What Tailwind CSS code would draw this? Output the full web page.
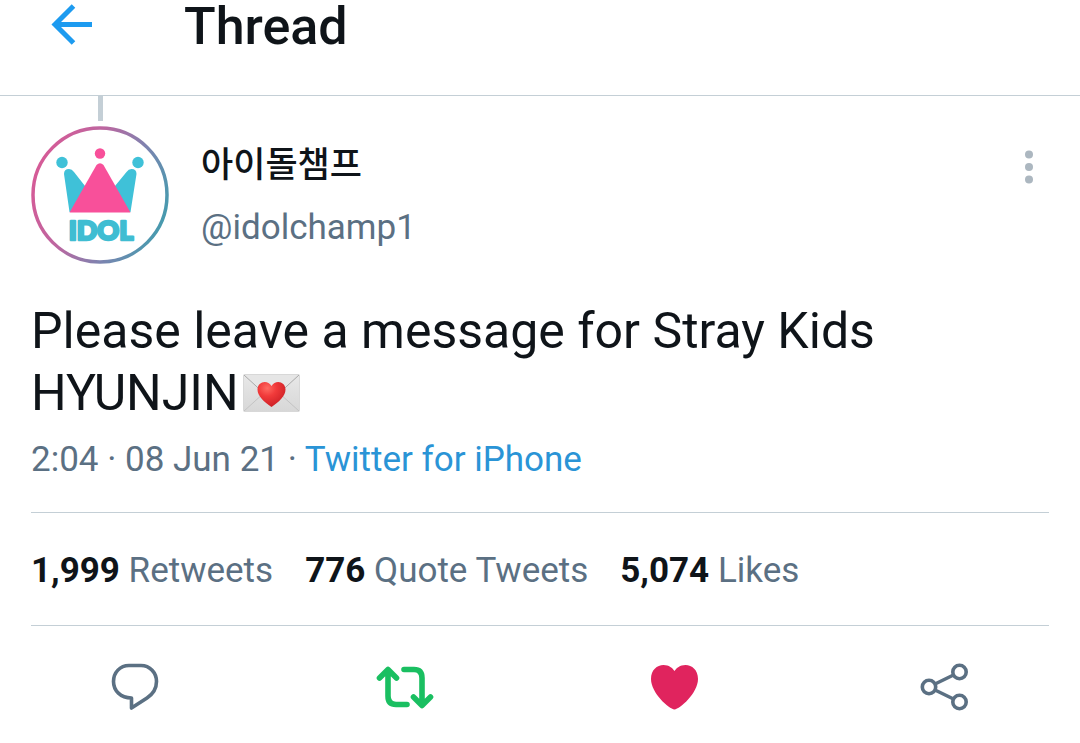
<!DOCTYPE html>
<html lang="en">
<head>
<meta charset="utf-8">
<meta name="viewport" content="width=device-width, initial-scale=1">
<title>Thread</title>
<script src="https://cdn.jsdelivr.net/npm/@tailwindcss/browser@4"></script>
</head>
<body class="bg-white font-[Roboto,'Noto_Sans_CJK_KR',sans-serif] text-[#0f1419]">
<header class="flex h-24 items-start border-b border-[#c4cfd6]">
  <button type="button" aria-label="Back" class="ml-12 h-12 w-12">
    <svg class="h-12 w-12" viewBox="0 0 48 48" fill="none" stroke="#1d9bf0" stroke-width="5"><path d="M44 24.500H6M25.500 6 7 24.500l18.500 18.500"/></svg>
  </button>
  <h1 class="ml-[88px] text-[52px] leading-[54px] font-medium">Thread</h1>
</header>
<main>
  <article>
    <div class="flex px-[31px]">
      <div class="flex w-[138px] shrink-0 flex-col items-center">
        <div class="mb-[5px] h-[25px] w-[5px] bg-[#c4cfd6]"></div>
        <svg class="h-[138px] w-[138px]" viewBox="0 0 138 138" role="img" aria-label="IDOL">
          <defs>
            <linearGradient id="ring" x1="0" y1="0.300" x2="1" y2="0.700">
              <stop offset="0" stop-color="#d75a96"/><stop offset="0.350" stop-color="#bd66a0"/><stop offset="0.680" stop-color="#7c84b0"/><stop offset="1" stop-color="#439cae"/>
            </linearGradient>
          </defs>
          <circle cx="69" cy="69" r="67" fill="none" stroke="url(#ring)" stroke-width="3.500"/>
          <g fill="#3fc1d8">
            <circle cx="31" cy="36.500" r="5.700"/><circle cx="107" cy="36.500" r="5.700"/>
            <path d="M38.500 86 33 48q0-5 5-5 3 0 5 3l11 14 5 26ZM99.500 86l6-38q0-5-5-5-3 0-5 3L84 60l-5 26Z"/>
          </g>
          <g fill="#f8509a"><circle cx="69" cy="27.500" r="5.200"/><path d="M38.500 86.500 65.500 39q3.500-3.500 7 0l27 47.500Z"/></g>
          <text x="70" y="114" text-anchor="middle" font-family="Lato, sans-serif" font-weight="900" font-size="27" fill="#3fbdd2" stroke="#3fbdd2" stroke-width="2.500" stroke-linejoin="round">IDOL</text>
        </svg>
      </div>
      <div class="ml-8 flex-1 pt-[42px]">
        <h2 class="text-[35px] leading-[56px] font-medium">아이돌챔프</h2>
        <p class="pt-1.5 text-[35px] leading-[56px] text-[#5b7083]">@idolchamp1</p>
      </div>
      <button type="button" aria-label="More" class="mt-[51px] h-10 w-10 self-start">
        <svg class="h-10 w-10" viewBox="0 0 40 40" fill="#acb7c0"><circle cx="20" cy="7.500" r="4"/><circle cx="20" cy="20" r="4"/><circle cx="20" cy="32.500" r="4"/></svg>
      </button>
    </div>
    <div class="px-[31px]">
      <p class="mt-9 text-[50px] leading-[62px]">Please leave a message for Stray Kids<br>HYUNJIN<svg class="ml-1 inline-block h-[38px] w-[57px] align-[-2px]" viewBox="0 0 57 38" role="img" aria-label="Love letter">
          <defs>
            <linearGradient id="paper" x1="0" y1="0" x2="0" y2="1"><stop offset="0" stop-color="#e8e8e8"/><stop offset="1" stop-color="#d7d7d7"/></linearGradient>
            <radialGradient id="love" cx="0.350" cy="0.250" r="0.800"><stop offset="0" stop-color="#ff6b62"/><stop offset="0.400" stop-color="#f13a3a"/><stop offset="1" stop-color="#c91d24"/></radialGradient>
          </defs>
          <rect x="0.500" y="0.500" width="56" height="37" rx="1" fill="url(#paper)" stroke="#d8d8d8"/>
          <path d="m1 37 20-18M56 37 36 19" stroke="#c3c3c3" fill="none"/>
          <path d="M1 1l24 22q3.500 3 7 0L56 1" fill="#e6e6e6" stroke="#a9a9a9"/>
          <path d="M28.500 33C21 28 14.500 22 14.500 15.500c0-8 10-10.500 14-3.500 4-7 14-4.500 14 3.500 0 6.500-6.500 12.500-14 17.500Z" fill="url(#love)"/>
        </svg></p>
      <p class="mt-2 text-[35px] leading-[56px] text-[#5b7083]">2:04 · 08 Jun 21 · <a href="#" class="text-[#2a94d6]">Twitter for iPhone</a></p>
      <div class="mt-6 flex gap-8 border-y border-[#c4cfd6] pt-[30px] pb-[26px] text-[35px] leading-[56px] whitespace-nowrap text-[#5b7083]">
        <a href="#"><b class="font-bold text-[#0f1419]">1,999</b> Retweets</a>
        <a href="#"><b class="font-bold text-[#0f1419]">776</b> Quote Tweets</a>
        <a href="#"><b class="font-bold text-[#0f1419]">5,074</b> Likes</a>
      </div>
    </div>
    <div class="grid grid-cols-4 justify-items-center pt-6">
      <button type="button" aria-label="Reply" class="h-[70px] w-20">
        <svg class="h-[70px] w-20" viewBox="0 0 80 70" fill="none" stroke="#5b7083" stroke-width="3.600" stroke-linejoin="round"><path d="M34 15.500H46C55 15.500 61.500 23 61.500 31.500 61.500 39 58 44 52 48L36.500 58V48C25.500 48 18.500 40.500 18.500 31.500S25 15.500 34 15.500Z"/></svg>
      </button>
      <button type="button" aria-label="Undo retweet" class="h-[70px] w-20">
        <svg class="h-[70px] w-20" viewBox="0 0 80 70" fill="none" stroke="#1abf61" stroke-width="5.600" stroke-linecap="round" stroke-linejoin="round"><path d="M14.500 28 23 19.500 31.500 28M23 20.500V46Q23 54.500 31 54.500H42M39 19.500H49Q57 19.500 57 28V54M48.500 47 57 55.500 65.500 47"/></svg>
      </button>
      <button type="button" aria-label="Unlike" class="h-[70px] w-20">
        <svg class="h-[70px] w-20" viewBox="0 0 80 70" fill="#e0245e"><path d="M39.500 59.500C34 59 16 43 16 29 16 20 22 15 28.500 15 34 15 37.500 18 39.500 21 41.500 18 45 15 50.500 15 57 15 63 20 63 29 63 43 45 59 39.500 59.500Z"/></svg>
      </button>
      <button type="button" aria-label="Share" class="h-[70px] w-20">
        <svg class="h-[70px] w-20" viewBox="0 0 80 70" fill="none" stroke="#5b7083" stroke-width="3.600"><circle cx="24" cy="37" r="6.700"/><circle cx="54.500" cy="22" r="6.700"/><circle cx="54.500" cy="52" r="6.700"/><path d="M30 34 48.500 25M30 40 48.500 49"/></svg>
      </button>
    </div>
  </article>
</main>
</body>
</html>
